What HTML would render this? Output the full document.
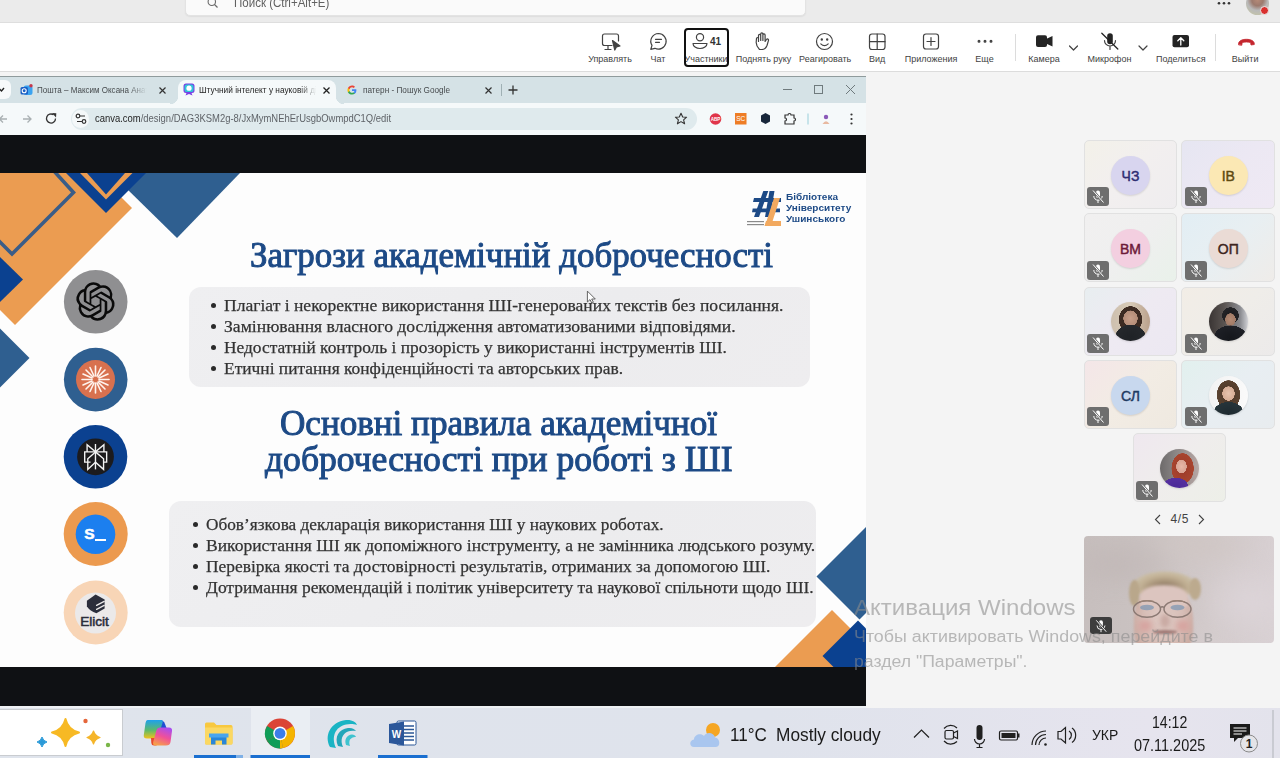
<!DOCTYPE html>
<html><head><meta charset="utf-8">
<style>
*{margin:0;padding:0;box-sizing:border-box}
html,body{width:1280px;height:758px;overflow:hidden;background:#f4f4f4;font-family:"Liberation Sans",sans-serif;position:relative}
.a{position:absolute}
.nw{white-space:nowrap}
.wm{font-family:"Liberation Sans",sans-serif;color:rgba(140,140,140,0.58);transform-origin:0 0}
.tile{width:93.8px;height:69.2px;border:1px solid #e1e1e1;border-radius:5px}
.av{width:38.8px;height:38.8px;border-radius:50%;text-align:center;font:400 14px/40px "Liberation Sans",sans-serif;-webkit-text-stroke:0.45px currentColor;box-shadow:0 1px 2px rgba(0,0,0,.12);margin-top:0.6px}
.mb{width:22px;height:19px;border-radius:3px;background:#6e6e6e}
.tt{font:9px/12px "Liberation Sans",sans-serif;color:#474b4e;transform-origin:0 0}
.tl{top:54.4px;width:100px;text-align:center;font:9px/11px "Liberation Sans",sans-serif;color:#424242}
#titlebar{left:0;top:0;width:1280px;height:23px;background:#ebebeb;border-bottom:1px solid #dedede}
#search{left:185px;top:-6px;width:621px;height:22px;background:#fafafa;border:1px solid #e3e3e3;border-radius:5px;box-shadow:0 0.5px 1.5px rgba(0,0,0,.06)}
#toolbar{left:0;top:23px;width:1280px;height:49px;background:#fff;border-bottom:1px solid #dcdcdc}
#stage{left:0;top:72px;width:1280px;height:636px;background:#f4f4f4}
#browser{left:0;top:76px;width:866px;height:631px;background:#0f1114}
#tabstrip{left:0;top:76px;width:866px;height:27px;background:#d5e2e6;border-top:1px solid #8f9b9c}
#addr{left:0;top:103px;width:866px;height:32px;background:#f5f9fa}
#slide{left:0;top:173px;width:866px;height:494px;background:#fdfdfd;overflow:hidden}
#taskbar{left:0;top:708px;width:1280px;height:50px;background:linear-gradient(90deg,#dfe4ec,#dfe3ec 60%,#e6e4ee 90%,#e3e3ec)}
.st{font-family:"Liberation Serif",serif;color:#1d4a86;font-size:35.5px;line-height:36px;transform-origin:0 0}
.bx{background:linear-gradient(135deg,#efeff1,#ececee 60%,#eeedef);border-radius:12px}
.bl{font-family:"Liberation Serif",serif;color:#333;transform-origin:0 0;font-size:17px;line-height:20px;-webkit-text-stroke:0.25px #333}
.bl div{position:absolute;white-space:nowrap}
.dot{position:absolute;width:5px;height:5px;border-radius:50%;background:#2a2a2a}
</style></head>
<body>
<div id="titlebar" class="a"></div>
<div id="search" class="a"></div>
<div id="toolbar" class="a"></div>
<!-- TITLEBAR -->
<svg class="a" style="left:207px;top:-3px" width="12" height="12" viewBox="0 0 12 12"><circle cx="4.8" cy="4.8" r="3.7" fill="none" stroke="#6a6a6a" stroke-width="1.1"/><line x1="7.5" y1="7.5" x2="10.5" y2="10.5" stroke="#6a6a6a" stroke-width="1.2"/></svg>
<div class="a nw" style="left:234px;top:-4px;font:12px/14px 'Liberation Sans',sans-serif;color:#616161;transform:scaleX(0.961);transform-origin:0 0">Поиск (Ctrl+Alt+E)</div>
<svg class="a" style="left:1216px;top:0" width="16" height="8"><circle cx="3" cy="3.3" r="1.3" fill="#333"/><circle cx="8" cy="3.3" r="1.3" fill="#333"/><circle cx="13" cy="3.3" r="1.3" fill="#333"/></svg>
<div class="a" style="left:1246px;top:-8px;width:23px;height:23px;border-radius:50%;background:radial-gradient(circle at 50% 35%,#b58a78 0,#9c7a6e 30%,#b9b9b9 55%,#c9c9a0 100%)"></div>
<div class="a" style="left:1259.5px;top:5.5px;width:9.5px;height:9.5px;border-radius:50%;background:#d9302e;border:1.3px solid #ebebeb"></div>
<!-- TOOLBAR -->
<div class="a nw tl" style="left:560px">Управлять</div>
<div class="a nw tl" style="left:608px">Чат</div>
<div class="a nw tl" style="left:656px">Участники</div>
<div class="a nw tl" style="left:713.5px">Поднять руку</div>
<div class="a nw tl" style="left:775.2px">Реагировать</div>
<div class="a nw tl" style="left:827.2px">Вид</div>
<div class="a nw tl" style="left:881px">Приложения</div>
<div class="a nw tl" style="left:934.5px">Еще</div>
<div class="a nw tl" style="left:994px">Камера</div>
<div class="a nw tl" style="left:1059.5px">Микрофон</div>
<div class="a nw tl" style="left:1130.8px">Поделиться</div>
<div class="a nw tl" style="left:1195.2px">Выйти</div>
<div class="a" style="left:684px;top:28px;width:45px;height:39px;border:2px solid #111;border-radius:4px"></div>
<div class="a nw" style="left:710px;top:35.5px;font:700 10px/12px 'Liberation Sans',sans-serif;color:#333">41</div>
<div class="a" style="left:1014.5px;top:34px;width:1px;height:27px;background:#dcdcdc"></div>
<div class="a" style="left:1215px;top:34px;width:1px;height:27px;background:#dcdcdc"></div>
<svg class="a" style="left:0;top:0" width="1280" height="72" viewBox="0 0 1280 72" fill="none" stroke="#424242" stroke-width="1.2" stroke-linecap="round" stroke-linejoin="round">
  <!-- manage -->
  <path d="M612,45.5 H604.5 a2,2 0 0 1 -2,-2 V36 a2,2 0 0 1 2,-2 H616.5 a2,2 0 0 1 2,2 V41"/>
  <path d="M608,45.5 V49 M605,49.5 H611"/>
  <path d="M612.5,40.5 L620,46 L616.5,46.8 L614.8,50 Z" fill="#424242"/>
  <!-- chat -->
  <path d="M658.5,33.5 a7.8,7.8 0 1 1 -3.6,14.8 L650.8,49.3 L652,45.4 A7.8,7.8 0 0 1 658.5,33.5 Z"/>
  <path d="M655.5,39.3 H661.5 M655.5,42.3 H659.5"/>
  <!-- people -->
  <circle cx="700" cy="37.2" r="3.6"/>
  <path d="M693,43.5 H707 a0,0 0 0 1 0,0 a7,5 0 0 1 -14,0 Z"/>
  <!-- hand -->
  <path d="M759.5,49.5 C757,47 756,44.5 756.2,42 L756.5,38.5 a1,1 0 0 1 2,0 V41.5 V35.5 a1.1,1.1 0 0 1 2.2,0 V40.5 V34 a1.1,1.1 0 0 1 2.2,0 V40.5 V35 a1.1,1.1 0 0 1 2.2,0 V41.5 L766.5,39.5 a1.1,1.1 0 0 1 2,0.8 L767,45.5 C766,48 764.5,49.5 762,49.5 Z"/>
  <!-- smile -->
  <circle cx="824.5" cy="41.5" r="8"/>
  <circle cx="821.8" cy="39.5" r="0.6" fill="#424242"/><circle cx="827.2" cy="39.5" r="0.6" fill="#424242"/>
  <path d="M820.8,43.8 Q824.5,47.5 828.2,43.8"/>
  <!-- grid -->
  <rect x="869.5" y="34" width="15.5" height="15.5" rx="2.5"/>
  <path d="M877.2,34 V49.5 M869.5,41.7 H885"/>
  <!-- apps -->
  <rect x="923.5" y="34" width="15" height="15" rx="2.5"/>
  <path d="M931,37.5 V45.5 M927,41.5 H935"/>
  <!-- more -->
  <circle cx="979" cy="41.3" r="0.9" fill="#424242"/><circle cx="985" cy="41.3" r="0.9" fill="#424242"/><circle cx="991" cy="41.3" r="0.9" fill="#424242"/>
  <!-- chevrons -->
  <path d="M1069.5,46 L1073.5,50 L1077.5,46 M1139,46 L1143,50 L1147,46"/>
  <!-- camera -->
  <rect x="1036" y="35.3" width="11" height="11.7" rx="2" fill="#242424" stroke="none"/>
  <path d="M1046,39 L1052.5,36 V46.5 L1046,43.5 Z" fill="#242424" stroke="none"/>
  <!-- mic -->
  <rect x="1107.2" y="33.3" width="5.6" height="11" rx="2.8" fill="#242424" stroke="none"/>
  <path d="M1104.5,40.5 a5.5,5.5 0 0 0 11,0 M1110,46 V49.5"/>
  <path d="M1101.8,33.2 L1117.8,49" stroke="#242424" stroke-width="1.3"/>
  <!-- share -->
  <rect x="1172.5" y="35" width="16.5" height="12.2" rx="2" fill="#242424" stroke="none"/>
  <path d="M1180.8,45 V38 M1177.8,40.8 L1180.8,37.8 L1183.8,40.8" stroke="#fff" stroke-width="1.3"/>
  <!-- leave -->
  <path d="M1238.5,44.5 C1238,41 1242,39.3 1246.4,39.3 C1250.8,39.3 1254.8,41 1254.3,44.5 L1251,45 L1250.6,42.5 C1248,41.8 1244.8,41.8 1242.2,42.5 L1241.8,45 Z" fill="#c4262e" stroke="#c4262e" stroke-width="0.8"/>
</svg>
<div id="stage" class="a"></div>
<div id="browser" class="a"></div>
<div id="tabstrip" class="a"></div>
<div id="addr" class="a"></div>

<!-- RIGHT PANEL -->
<div class="a tile" style="left:1083.5px;top:140px;background:linear-gradient(135deg,#f3f1e9,#f2efef 50%,#efedef)"></div>
<div class="a av" style="left:1111.1px;top:155.3px;background:#d8d5ef;color:#2e2d72">ЧЗ</div>
<div class="a mb" style="left:1087.0px;top:187.2px"><svg width="22" height="19" viewBox="0 0 22 19"><rect x="9" y="3.5" width="4" height="7.5" rx="2" fill="#fff"/><path d="M6.8,9 a4.2,4.2 0 0 0 8.4,0 M11,13.2 V16" fill="none" stroke="#fff" stroke-width="1"/><path d="M6,3.5 L16.5,15.5" stroke="#6e6e6e" stroke-width="2.4"/><path d="M6,3.5 L16.5,15.5" stroke="#fff" stroke-width="1"/></svg></div>
<div class="a tile" style="left:1181.3px;top:140px;background:linear-gradient(135deg,#e6e6f2,#ece8f3 50%,#efe9f4)"></div>
<div class="a av" style="left:1208.9px;top:155.3px;background:#fbe8b4;color:#5e4a10">ІВ</div>
<div class="a mb" style="left:1184.8px;top:187.2px"><svg width="22" height="19" viewBox="0 0 22 19"><rect x="9" y="3.5" width="4" height="7.5" rx="2" fill="#fff"/><path d="M6.8,9 a4.2,4.2 0 0 0 8.4,0 M11,13.2 V16" fill="none" stroke="#fff" stroke-width="1"/><path d="M6,3.5 L16.5,15.5" stroke="#6e6e6e" stroke-width="2.4"/><path d="M6,3.5 L16.5,15.5" stroke="#fff" stroke-width="1"/></svg></div>
<div class="a tile" style="left:1083.5px;top:213.3px;background:linear-gradient(135deg,#f1f0f0,#efefef 50%,#e9f1ea)"></div>
<div class="a av" style="left:1111.1px;top:228.6px;background:#f3cfe0;color:#6d1a38">ВМ</div>
<div class="a mb" style="left:1087.0px;top:260.5px"><svg width="22" height="19" viewBox="0 0 22 19"><rect x="9" y="3.5" width="4" height="7.5" rx="2" fill="#fff"/><path d="M6.8,9 a4.2,4.2 0 0 0 8.4,0 M11,13.2 V16" fill="none" stroke="#fff" stroke-width="1"/><path d="M6,3.5 L16.5,15.5" stroke="#6e6e6e" stroke-width="2.4"/><path d="M6,3.5 L16.5,15.5" stroke="#fff" stroke-width="1"/></svg></div>
<div class="a tile" style="left:1181.3px;top:213.3px;background:linear-gradient(135deg,#e2eef4,#e8eff2 50%,#efece9)"></div>
<div class="a av" style="left:1208.9px;top:228.6px;background:#eadbd5;color:#3d2520">ОП</div>
<div class="a mb" style="left:1184.8px;top:260.5px"><svg width="22" height="19" viewBox="0 0 22 19"><rect x="9" y="3.5" width="4" height="7.5" rx="2" fill="#fff"/><path d="M6.8,9 a4.2,4.2 0 0 0 8.4,0 M11,13.2 V16" fill="none" stroke="#fff" stroke-width="1"/><path d="M6,3.5 L16.5,15.5" stroke="#6e6e6e" stroke-width="2.4"/><path d="M6,3.5 L16.5,15.5" stroke="#fff" stroke-width="1"/></svg></div>
<div class="a tile" style="left:1083.5px;top:286.6px;background:linear-gradient(135deg,#e8eef0,#eeeaf2 50%,#ece8f2)"></div>
<div class="a av" style="left:1111.1px;top:301.9px;background:radial-gradient(ellipse 55% 45% at 50% 90%,#1f2226 0,#25282c 70%,rgba(0,0,0,0) 71%),radial-gradient(ellipse 30% 33% at 50% 42%,#c9a08a 0,#b48d78 60%,rgba(0,0,0,0) 62%),radial-gradient(ellipse 42% 48% at 50% 45%,#3a2a22 0,#3d2b22 70%,rgba(0,0,0,0) 72%),linear-gradient(90deg,#cdbfae,#d8cbb8 50%,#b9a08b)"></div>
<div class="a mb" style="left:1087.0px;top:333.8px"><svg width="22" height="19" viewBox="0 0 22 19"><rect x="9" y="3.5" width="4" height="7.5" rx="2" fill="#fff"/><path d="M6.8,9 a4.2,4.2 0 0 0 8.4,0 M11,13.2 V16" fill="none" stroke="#fff" stroke-width="1"/><path d="M6,3.5 L16.5,15.5" stroke="#6e6e6e" stroke-width="2.4"/><path d="M6,3.5 L16.5,15.5" stroke="#fff" stroke-width="1"/></svg></div>
<div class="a tile" style="left:1181.3px;top:286.6px;background:linear-gradient(135deg,#f2ede6,#efede9 50%,#eceaea)"></div>
<div class="a av" style="left:1208.9px;top:301.9px;background:radial-gradient(ellipse 60% 45% at 55% 92%,#15171c 0,#1e2026 70%,rgba(0,0,0,0) 71%),radial-gradient(ellipse 22% 26% at 55% 45%,#b48a73 0,#a17b67 60%,rgba(0,0,0,0) 62%),radial-gradient(ellipse 30% 30% at 55% 35%,#1a1a1d 0,#232326 70%,rgba(0,0,0,0) 72%),linear-gradient(90deg,#3a3534,#5b5552 40%,#8a8b90 80%,#cfd0d4)"></div>
<div class="a mb" style="left:1184.8px;top:333.8px"><svg width="22" height="19" viewBox="0 0 22 19"><rect x="9" y="3.5" width="4" height="7.5" rx="2" fill="#fff"/><path d="M6.8,9 a4.2,4.2 0 0 0 8.4,0 M11,13.2 V16" fill="none" stroke="#fff" stroke-width="1"/><path d="M6,3.5 L16.5,15.5" stroke="#6e6e6e" stroke-width="2.4"/><path d="M6,3.5 L16.5,15.5" stroke="#fff" stroke-width="1"/></svg></div>
<div class="a tile" style="left:1083.5px;top:360px;background:linear-gradient(135deg,#f4e6e8,#f2ece4 50%,#efe9e0)"></div>
<div class="a av" style="left:1111.1px;top:375.3px;background:#c8d8ee;color:#1f3b63">СЛ</div>
<div class="a mb" style="left:1087.0px;top:407.2px"><svg width="22" height="19" viewBox="0 0 22 19"><rect x="9" y="3.5" width="4" height="7.5" rx="2" fill="#fff"/><path d="M6.8,9 a4.2,4.2 0 0 0 8.4,0 M11,13.2 V16" fill="none" stroke="#fff" stroke-width="1"/><path d="M6,3.5 L16.5,15.5" stroke="#6e6e6e" stroke-width="2.4"/><path d="M6,3.5 L16.5,15.5" stroke="#fff" stroke-width="1"/></svg></div>
<div class="a tile" style="left:1181.3px;top:360px;background:linear-gradient(135deg,#e2f0ee,#e8eef2 50%,#e8ecef)"></div>
<div class="a av" style="left:1208.9px;top:375.3px;background:radial-gradient(ellipse 55% 40% at 50% 95%,#1e2a30 0,#26343a 70%,rgba(0,0,0,0) 71%),radial-gradient(ellipse 26% 30% at 50% 45%,#e7c3ae 0,#d6ad96 60%,rgba(0,0,0,0) 62%),radial-gradient(ellipse 42% 52% at 50% 48%,#4a3527 0,#5a4230 70%,rgba(0,0,0,0) 72%),linear-gradient(90deg,#f2f2f2,#fafafa)"></div>
<div class="a mb" style="left:1184.8px;top:407.2px"><svg width="22" height="19" viewBox="0 0 22 19"><rect x="9" y="3.5" width="4" height="7.5" rx="2" fill="#fff"/><path d="M6.8,9 a4.2,4.2 0 0 0 8.4,0 M11,13.2 V16" fill="none" stroke="#fff" stroke-width="1"/><path d="M6,3.5 L16.5,15.5" stroke="#6e6e6e" stroke-width="2.4"/><path d="M6,3.5 L16.5,15.5" stroke="#fff" stroke-width="1"/></svg></div>
<div class="a tile" style="left:1132.5px;top:433.3px;background:linear-gradient(135deg,#efe8ef,#efedec 50%,#edefe8)"></div>
<div class="a av" style="left:1160.1px;top:448.6px;background:radial-gradient(ellipse 45% 30% at 40% 95%,#4b2a98 0,#55309f 70%,rgba(0,0,0,0) 71%),radial-gradient(ellipse 22% 28% at 55% 45%,#e8b8a8 0,#d9a494 60%,rgba(0,0,0,0) 62%),radial-gradient(ellipse 40% 55% at 58% 50%,#9b3a2a 0,#a8442e 70%,rgba(0,0,0,0) 72%),linear-gradient(90deg,#6d6a6a,#8a8686 40%,#b7a7a4)"></div>
<div class="a mb" style="left:1136.0px;top:480.5px"><svg width="22" height="19" viewBox="0 0 22 19"><rect x="9" y="3.5" width="4" height="7.5" rx="2" fill="#fff"/><path d="M6.8,9 a4.2,4.2 0 0 0 8.4,0 M11,13.2 V16" fill="none" stroke="#fff" stroke-width="1"/><path d="M6,3.5 L16.5,15.5" stroke="#6e6e6e" stroke-width="2.4"/><path d="M6,3.5 L16.5,15.5" stroke="#fff" stroke-width="1"/></svg></div>
<svg class="a" style="left:1150px;top:512px" width="60" height="16" fill="none" stroke="#424242" stroke-width="1.1"><path d="M10,3 L5.5,7.5 L10,12"/><path d="M49,3 L53.5,7.5 L49,12"/></svg>
<div class="a nw" style="left:1170.5px;top:511.8px;font:12px/14px 'Liberation Sans',sans-serif;color:#424242;letter-spacing:0.6px">4/5</div>
<!-- self video -->
<div class="a" style="left:1084.4px;top:536.3px;width:189.6px;height:106.4px;border-radius:4px;overflow:hidden;background:linear-gradient(100deg,#c6bebd 0,#cac2c1 35%,#d4cccd 70%,#d9d1d4 100%)">
  <div class="a" style="left:-10px;top:-10px;width:210px;height:126px;filter:blur(6px);background:radial-gradient(ellipse 30% 25% at 20% 30%,#c2b9b8,rgba(0,0,0,0)),radial-gradient(ellipse 25% 30% at 85% 60%,#dcd4d8,rgba(0,0,0,0)),radial-gradient(ellipse 30% 20% at 60% 15%,#cfc6c4,rgba(0,0,0,0))"></div>
  <div class="a" style="left:50px;top:50px;width:59px;height:74px;border-radius:45% 45% 40% 40%;filter:blur(1px);background:radial-gradient(ellipse 60% 55% at 50% 45%,#e0cbc5 0,#d8bfb8 55%,#c7a69c 100%)"></div>
  <div class="a" style="left:54px;top:84px;width:14px;height:12px;border-radius:50%;filter:blur(3px);background:#d6a29e"></div>
  <div class="a" style="left:92px;top:84px;width:14px;height:12px;border-radius:50%;filter:blur(3px);background:#d6a29e"></div>
  <div class="a" style="left:46px;top:30px;width:69px;height:30px;border-radius:50% 50% 35% 35%;filter:blur(1.2px);background:radial-gradient(ellipse 50% 60% at 50% 75%,#7d6b55 0,#a8947a 40%,#c2b195 70%,#c9bca4 90%,rgba(200,188,164,0) 100%)"></div>
  <div class="a" style="left:45px;top:44px;width:11px;height:26px;border-radius:50%;filter:blur(1.2px);background:#b9a78b"></div>
  <div class="a" style="left:105px;top:42px;width:12px;height:22px;border-radius:50%;filter:blur(1.2px);background:#bcaa8e"></div>
  <div class="a" style="left:56px;top:49px;width:48px;height:22px;border-radius:50% 50% 10% 10%;filter:blur(1.5px);background:#dcc5bf"></div>
  <svg class="a" style="left:46px;top:62px" width="66" height="24" fill="none" stroke="#8c7a74" stroke-width="1.5"><ellipse cx="17" cy="11" rx="13.5" ry="8.3"/><ellipse cx="47.5" cy="11" rx="13.5" ry="8.3"/><path d="M30.5,9.5 Q32.2,8 34,9.5"/><ellipse cx="17" cy="9.5" rx="7" ry="2.8" fill="#7f97b3" stroke="none" opacity="0.75"/><ellipse cx="47.5" cy="9.5" rx="7" ry="2.8" fill="#7f97b3" stroke="none" opacity="0.75"/><path d="M9,4 Q17,1.5 24,3.5 M40.5,3.5 Q47.5,1.5 55,4" stroke="#9a8376" stroke-width="1.2"/></svg>
  <div class="a" style="left:76px;top:78px;width:10px;height:14px;border-radius:50%;filter:blur(2px);background:#c9aaa3"></div>
  <div class="a" style="left:69px;top:94px;width:24px;height:3.5px;border-radius:50%;filter:blur(0.8px);background:#a07a76"></div>
  <div class="a" style="left:5.9px;top:80.7px;width:22.2px;height:17.5px;border-radius:3px;background:#3d3d3d"><svg width="22" height="18" viewBox="0 0 22 19"><rect x="9" y="3.5" width="4" height="7.5" rx="2" fill="#fff"/><path d="M6.8,9 a4.2,4.2 0 0 0 8.4,0 M11,13.2 V16" fill="none" stroke="#fff" stroke-width="1"/><path d="M6,3.5 L16.5,15.5" stroke="#3d3d3d" stroke-width="2.4"/><path d="M6,3.5 L16.5,15.5" stroke="#fff" stroke-width="1"/></svg></div>
</div>
<!-- BROWSER CHROME -->
<div class="a" style="left:-8px;top:80px;width:19px;height:19px;border-radius:6px;background:#f7fafb"></div>
<svg class="a" style="left:0;top:86px" width="6" height="8"><path d="M-1,2.5 L1.5,5 L4,2" fill="none" stroke="#222" stroke-width="1.4"/></svg>
<!-- tab1 -->
<svg class="a" style="left:19.5px;top:83.5px" width="13" height="12" viewBox="0 0 13 12"><rect x="3.5" y="1.5" width="9" height="9.5" rx="2.5" fill="#3ba3f0"/><rect x="0.5" y="3" width="7.5" height="7.5" rx="1.5" fill="#1a5fc4"/><circle cx="4.2" cy="6.8" r="2" fill="none" stroke="#fff" stroke-width="1.1"/><circle cx="11" cy="1.8" r="1.7" fill="#c5364a"/></svg>
<div class="a" style="left:37px;top:82px;width:116px;height:18px;overflow:hidden"><div class="a nw tt" style="left:0;top:2px;transform:scaleX(0.8923)">Пошта – Максим Оксана Анатоліївна</div></div>
<div class="a" style="left:130px;top:82px;width:24px;height:18px;background:linear-gradient(90deg,rgba(213,226,230,0),#d5e2e6 70%)"></div>
<svg class="a" style="left:158px;top:85.5px" width="9" height="9"><path d="M1.5,1.5 L7.5,7.5 M7.5,1.5 L1.5,7.5" stroke="#333" stroke-width="1.2"/></svg>
<!-- tab2 active -->
<div class="a" style="left:178px;top:80px;width:158px;height:24px;background:#f5f9fa;border-radius:8px 8px 0 0"></div>
<div class="a" style="left:170px;top:96px;width:8px;height:8px;background:radial-gradient(circle at 0 0,#d5e2e6 8px,#f5f9fa 8.5px)"></div>
<div class="a" style="left:336px;top:96px;width:8px;height:8px;background:radial-gradient(circle at 100% 0,#d5e2e6 8px,#f5f9fa 8.5px)"></div>
<svg class="a" style="left:182.5px;top:83px" width="12" height="13" viewBox="0 0 12 13"><rect x="0.5" y="0.5" width="11" height="9.5" rx="2.5" fill="#7b3fe4"/><rect x="1.5" y="1.5" width="9" height="7.5" rx="2" fill="#2fc5d8"/><circle cx="6" cy="5.2" r="2.6" fill="#fff"/><path d="M3.5,10 L2.5,12.5 L6,11 L9.5,12.5 L8.5,10z" fill="#7b3fe4"/></svg>
<div class="a" style="left:199.4px;top:82px;width:120px;height:18px;overflow:hidden"><div class="a nw tt" style="left:0;top:2px;color:#1f1f1f;transform:scaleX(0.9222)">Штучний інтелект у науковій діяльності</div></div>
<div class="a" style="left:300px;top:82px;width:22px;height:18px;background:linear-gradient(90deg,rgba(245,249,250,0),#f5f9fa 75%)"></div>
<svg class="a" style="left:321.5px;top:85.5px" width="9" height="9"><path d="M1.5,1.5 L7.5,7.5 M7.5,1.5 L1.5,7.5" stroke="#222" stroke-width="1.3"/></svg>
<!-- tab3 -->
<svg class="a" style="left:346.5px;top:84.5px" width="10" height="10" viewBox="0 0 24 24"><path d="M22.5 12.3c0-.8-.1-1.5-.2-2.2H12v4.3h5.9c-.3 1.4-1 2.5-2.2 3.3v2.7h3.6c2-1.9 3.2-4.7 3.2-8.1z" fill="#4285f4"/><path d="M12 23c2.9 0 5.4-1 7.2-2.6l-3.6-2.7c-1 .7-2.2 1.1-3.6 1.1-2.8 0-5.1-1.9-6-4.4H2.3v2.8C4.1 20.7 7.8 23 12 23z" fill="#34a853"/><path d="M6 14.4c-.2-.7-.4-1.4-.4-2.2s.1-1.5.4-2.2V7.2H2.3C1.5 8.7 1 10.4 1 12.2s.5 3.5 1.3 5l3.7-2.8z" fill="#fbbc05"/><path d="M12 5.4c1.6 0 3 .6 4.1 1.6l3.1-3.1C17.4 2.1 14.9 1 12 1 7.8 1 4.1 3.3 2.3 7.2L6 10c.9-2.6 3.2-4.6 6-4.6z" fill="#ea4335"/></svg>
<div class="a nw tt" style="left:362.5px;top:84px;transform:scaleX(0.9125)">патерн - Пошук Google</div>
<svg class="a" style="left:483.5px;top:85.5px" width="9" height="9"><path d="M1.5,1.5 L7.5,7.5 M7.5,1.5 L1.5,7.5" stroke="#333" stroke-width="1.2"/></svg>
<div class="a" style="left:500.5px;top:84px;width:1px;height:12px;background:#9fb0b4"></div>
<svg class="a" style="left:507px;top:84px" width="12" height="12"><path d="M6,1.5 V10.5 M1.5,6 H10.5" stroke="#333" stroke-width="1.3"/></svg>
<!-- window controls -->
<svg class="a" style="left:780px;top:82px" width="80" height="16" fill="none" stroke="#6f7a7d" stroke-width="1"><path d="M3,7.5 H12"/><rect x="34.5" y="3.5" width="8" height="8"/><path d="M66,3 L75,12 M75,3 L66,12"/></svg>
<!-- address bar -->
<svg class="a" style="left:0;top:110px" width="60" height="18" fill="none" stroke-width="1.3"><path d="M7,9 H0 M3,5.5 L-0.5,9 L3,12.5" stroke="#a9b0b2"/><path d="M23,9 H31 M27.5,5.5 L31,9 L27.5,12.5" stroke="#a9b0b2"/><path d="M55.5,8.5 A4.5,4.5 0 1 1 53.5,4.8" stroke="#333"/><path d="M52,3 L56.3,3.2 L56,7.5 Z" fill="#333" stroke="none"/></svg>
<div class="a" style="left:71.2px;top:108px;width:626px;height:22px;border-radius:11px;background:#dfeaed"></div>
<div class="a" style="left:72px;top:110px;width:17px;height:18px;border-radius:9px;background:#f4f8f9"></div>
<svg class="a" style="left:75px;top:113px" width="12" height="12" fill="none" stroke="#333" stroke-width="1.2"><circle cx="3" cy="3" r="1.8"/><path d="M5,3 H10 M2,8.5 H7"/><circle cx="9" cy="8.5" r="1.8"/></svg>
<div class="a nw" style="left:94.5px;top:111px;font:11px/15px 'Liberation Sans',sans-serif;color:#5f6368;transform:scaleX(0.8585);transform-origin:0 0"><span style="color:#1f1f1f">canva.com</span>/design/DAG3KSM2g-8/JxMymNEhErUsgbOwmpdC1Q/edit</div>
<svg class="a" style="left:674px;top:112px" width="14" height="13"><path d="M7,1.2 L8.7,5 L12.6,5.2 L9.6,7.8 L10.6,11.8 L7,9.6 L3.4,11.8 L4.4,7.8 L1.4,5.2 L5.3,5 Z" fill="none" stroke="#333" stroke-width="1.1" stroke-linejoin="round"/></svg>
<svg class="a" style="left:700px;top:110px" width="166" height="18">
  <circle cx="15.5" cy="9" r="5.8" fill="#e0354a"/><text x="15.5" y="10.8" font-family="Liberation Sans" font-size="4.6" font-weight="700" fill="#fff" text-anchor="middle">ABP</text>
  <rect x="35" y="3" width="11.5" height="11.5" fill="#ee7d25"/><text x="40.8" y="11.2" font-family="Liberation Sans" font-size="6.5" fill="#fff" text-anchor="middle">SC</text>
  <path d="M65.5,3 L70,5.5 V11.5 L65.5,14 L61,11.5 V5.5 Z" fill="#17263a"/>
  <path d="M85,5 H88 a1.5,1.5 0 0 1 3,0 H94 V8 a1.5,1.5 0 0 1 0,3 V14 H85 V11 a1.5,1.5 0 0 0 0,-3 Z" fill="none" stroke="#333" stroke-width="1.2"/>
  <rect x="107.5" y="3.5" width="1" height="11" fill="#9ad0da"/>
  <circle cx="126" cy="7" r="2.2" fill="#8a5ab8"/><path d="M122.5,14 Q126,8.5 129.5,14 Z" fill="#e8b9a0"/>
  <circle cx="151.5" cy="4.5" r="1.1" fill="#333"/><circle cx="151.5" cy="9" r="1.1" fill="#333"/><circle cx="151.5" cy="13.5" r="1.1" fill="#333"/>
</svg>

<!-- SLIDE -->
<div id="slide" class="a">
  <svg class="a" style="left:0;top:0" width="866" height="494" viewBox="0 173 866 494">
    <polygon points="126,188 141,173 240,173 177,238" fill="#2f5f90"/>
    <polygon points="0,173 97,173 132,208 15,325 0,310" fill="#eb9c51"/>
    <polyline points="53,170 73.5,192.5 12,254 -12,230" fill="none" stroke="#3a5d88" stroke-width="3.6"/>
    <polygon points="66,173 146,173 106,213" fill="#0b4190"/>
    <polygon points="80,173 132.5,173 106,199.5" fill="#eb9c51"/>
    <polygon points="87,173 125,173 106,194.5" fill="#0b4190"/>
    <polygon points="0,257 23,279.5 0,302" fill="#0b4190"/>
    <polygon points="0,328.5 29.5,358 0,387.5" fill="#2f5f90"/>
    <polygon points="816.5,576.5 866,527 866,626" fill="#2f5f90"/>
    <polygon points="832,610 889,667 775,667" fill="#eb9c51"/>
    <polygon points="858,621 866,613 866,629" fill="#fdfdfd"/>
    <polygon points="822.5,656 858,620.5 866,628.5 866,667 833.5,667" fill="#0b4190"/>
    <!-- library logo -->
    <polygon points="754,217 759,217 768.3,191 763.3,191" fill="#1d4a86"/>
    <polygon points="765,217 770,217 774.5,191 769.5,191" fill="#1d4a86"/>
    <polygon points="754,198 781,198 781,202 753,202" fill="#1d4a86"/>
    <polygon points="752.7,208.4 780,208.4 780,212.2 752,212.2" fill="#1d4a86"/>
    <polygon points="774,198 780,198 771,226 765,226" fill="#f2a95f"/>
    <polygon points="766,221 781,221 781,226 764.5,226" fill="#f2a95f"/>
    <rect x="747" y="221" width="17" height="1.2" fill="#8a8a8a"/>
    <rect x="747" y="224" width="17" height="1.2" fill="#8a8a8a"/>
  <!-- tool circles -->
    <circle cx="95.7" cy="301.8" r="31.8" fill="#8f8f91"/>
    <g transform="translate(76.3,282.3) scale(1.6)"><path fill="#0a0a0a" d="M22.2819 9.8211a5.9847 5.9847 0 0 0-.5157-4.9108 6.0462 6.0462 0 0 0-6.5098-2.9A6.0651 6.0651 0 0 0 4.9807 4.1818a5.9847 5.9847 0 0 0-3.9977 2.9 6.0462 6.0462 0 0 0 .7427 7.0966 5.98 5.98 0 0 0 .511 4.9107 6.051 6.051 0 0 0 6.5146 2.9001A5.9847 5.9847 0 0 0 13.2599 24a6.0557 6.0557 0 0 0 5.7718-4.2058 5.9894 5.9894 0 0 0 3.9977-2.9001 6.0557 6.0557 0 0 0-.7475-7.0729zm-9.022 12.6081a4.4755 4.4755 0 0 1-2.8764-1.0408l.1419-.0804 4.7783-2.7582a.7948.7948 0 0 0 .3927-.6813v-6.7369l2.02 1.1686a.071.071 0 0 1 .038.052v5.5826a4.504 4.504 0 0 1-4.4945 4.4944zm-9.6607-4.1254a4.4708 4.4708 0 0 1-.5346-3.0137l.142.0852 4.783 2.7582a.7712.7712 0 0 0 .7806 0l5.8428-3.3685v2.3324a.0804.0804 0 0 1-.0332.0615L9.74 19.9502a4.4992 4.4992 0 0 1-6.1408-1.6464zM2.3408 7.8956a4.485 4.485 0 0 1 2.3655-1.9728V11.6a.7664.7664 0 0 0 .3879.6765l5.8144 3.3543-2.0201 1.1685a.0757.0757 0 0 1-.071 0l-4.8303-2.7865A4.504 4.504 0 0 1 2.3408 7.872zm16.5963 3.8558L13.1038 8.364 15.1192 7.2a.0757.0757 0 0 1 .071 0l4.8303 2.7913a4.4944 4.4944 0 0 1-.6765 8.1042v-5.6772a.79.79 0 0 0-.407-.667zm2.0107-3.0231l-.142-.0852-4.7735-2.7818a.7759.7759 0 0 0-.7854 0L9.409 9.2297V6.8974a.0662.0662 0 0 1 .0284-.0615l4.8303-2.7866a4.4992 4.4992 0 0 1 6.6802 4.66zM8.3065 12.863l-2.02-1.1638a.0804.0804 0 0 1-.038-.0567V6.0742a4.4992 4.4992 0 0 1 7.3757-3.4537l-.142.0805L8.704 5.459a.7948.7948 0 0 0-.3927.6813zm1.0976-2.3654l2.602-1.4998 2.6069 1.4998v2.9994l-2.5974 1.4997-2.6067-1.4997Z"/></g>
    <circle cx="95.7" cy="379.6" r="31.8" fill="#2f5f90"/>
    <circle cx="95.5" cy="379.5" r="19.5" fill="#d8714f"/>
    <g stroke="#fff4ee" stroke-width="1.6" stroke-linecap="round">
      <line x1="95.5" y1="366" x2="95.5" y2="376"/><line x1="95.5" y1="383" x2="95.5" y2="393"/>
      <line x1="82" y1="379.5" x2="92" y2="379.5"/><line x1="99" y1="379.5" x2="109" y2="379.5"/>
      <line x1="86" y1="370" x2="93" y2="377"/><line x1="98" y1="382" x2="105" y2="389"/>
      <line x1="105" y1="370" x2="98" y2="377"/><line x1="93" y1="382" x2="86" y2="389"/>
      <line x1="90" y1="367.5" x2="94" y2="376"/><line x1="97" y1="383" x2="101" y2="391.5"/>
      <line x1="101" y1="367.5" x2="97" y2="376"/><line x1="94" y1="383" x2="90" y2="391.5"/>
      <line x1="83" y1="374" x2="92" y2="378"/><line x1="99" y1="381" x2="108" y2="385"/>
      <line x1="108" y1="374" x2="99" y2="378"/><line x1="92" y1="381" x2="83" y2="385"/>
    </g>
    <circle cx="95.5" cy="456.8" r="31.8" fill="#0b4190"/>
    <circle cx="95.5" cy="456.8" r="18.4" fill="#1c1b1d"/>
    <g transform="translate(84.7,444) scale(0.0686)" fill="none" stroke="#f4f4f4" stroke-width="20" stroke-linejoin="miter">
      <path d="M35,115 V10 L157,115 L280,10 V115"/>
      <path d="M85,265 H0 V115 H320 V265 H275"/>
      <path d="M157,0 V370"/>
      <path d="M157,115 L45,215 V370 L157,265 L275,370 V215 L157,115"/>
    </g>
    <circle cx="95.7" cy="534" r="32" fill="#ec9a4f"/>
    <circle cx="95.5" cy="534.2" r="19.8" fill="#1c7fef"/>
    <circle cx="95.7" cy="612.5" r="32" fill="#f8d5b6"/>
    <circle cx="95.5" cy="613" r="20.5" fill="#ebe9e9"/>
    <g>
      <path d="M86.9,600.8 L95.6,594.6 L104.6,599.6 L104.6,608.6 L96.4,613.2 Q90,611 86.9,606.5 Z" fill="#2b2e3b"/>
      <path d="M96.6,605.4 L104.2,601.4 M96.6,609.4 L104.2,605.4" stroke="#ebe9e9" stroke-width="1.3" stroke-linecap="round"/>
    </g>
  </svg>
  <div class="a nw" style="left:785.5px;top:19px;font:700 9px/11.2px 'Liberation Sans',sans-serif;color:#1d4a86;transform:scaleX(1.113);transform-origin:0 0">Бібліотека<br>Університету<br>Ушинського</div>
  <div class="a nw" style="left:84.3px;top:352.8px;font:700 15.5px/16px 'Liberation Sans',sans-serif;color:#fff;-webkit-text-stroke:0.5px #fff">S</div><div class="a" style="left:94.8px;top:365.6px;width:11.6px;height:2.3px;background:#fff"></div>
  <div class="a nw" style="left:80.2px;top:441.5px;font:400 13.6px/14px 'Liberation Sans',sans-serif;color:#2b2e3b;-webkit-text-stroke:0.55px #2b2e3b">Elicit</div>
  <div class="a bx" style="left:189px;top:114px;width:621px;height:100px"></div>
  <div class="a bx" style="left:169px;top:328px;width:647px;height:126px"></div>
</div>
<div class="a st nw" style="left:250px;top:236.5px;-webkit-text-stroke:1px #1d4a86;transform:scaleX(0.9832)">Загрози академічній доброчесності</div>
<div class="a st nw" style="left:280px;top:406px;font-size:35px;-webkit-text-stroke:1px #1d4a86;transform:scaleX(1.0026)">Основні правила академічної</div>
<div class="a st nw" style="left:265px;top:442px;font-size:35px;-webkit-text-stroke:1px #1d4a86;transform:scaleX(1.0162)">доброчесності при роботі з ШІ</div>


<div class="a bl nw" style="left:223.5px;top:295.8px;transform:scaleX(1.0324)">Плагіат і некоректне використання ШІ-генерованих текстів без посилання.</div>
<div class="a dot" style="left:210.8px;top:303.0px"></div>
<div class="a bl nw" style="left:223.5px;top:316.8px;transform:scaleX(1.0367)">Замінювання власного дослідження автоматизованими відповідями.</div>
<div class="a dot" style="left:210.8px;top:324.0px"></div>
<div class="a bl nw" style="left:223.5px;top:337.8px;transform:scaleX(1.0219)">Недостатній контроль і прозорість у використанні інструментів ШІ.</div>
<div class="a dot" style="left:210.8px;top:345.0px"></div>
<div class="a bl nw" style="left:223.5px;top:358.8px;transform:scaleX(1.0242)">Етичні питання конфіденційності та авторських прав.</div>
<div class="a dot" style="left:210.8px;top:366.0px"></div>
<div class="a bl nw" style="left:206.2px;top:514.8px;transform:scaleX(1.0149)">Обов’язкова декларація використання ШІ у наукових роботах.</div>
<div class="a dot" style="left:193.3px;top:522.0px"></div>
<div class="a bl nw" style="left:206.2px;top:535.8px;transform:scaleX(1.0313)">Використання ШІ як допоміжного інструменту, а не замінника людського розуму.</div>
<div class="a dot" style="left:193.3px;top:543.0px"></div>
<div class="a bl nw" style="left:206.2px;top:556.8px;transform:scaleX(1.0229)">Перевірка якості та достовірності результатів, отриманих за допомогою ШІ.</div>
<div class="a dot" style="left:193.3px;top:564.0px"></div>
<div class="a bl nw" style="left:206.2px;top:577.8px;transform:scaleX(1.0252)">Дотримання рекомендацій і політик університету та наукової спільноти щодо ШІ.</div>
<div class="a dot" style="left:193.3px;top:585.0px"></div>

<svg class="a" style="left:586px;top:290px" width="12" height="15" viewBox="0 0 12 15"><path d="M1.4,1.1 V12 L4,9.6 L5.8,13 L7.4,12.3 L5.7,9 H9.3Z" fill="#fff" stroke="#555" stroke-width="0.9" stroke-linejoin="round"/></svg>
<div id="taskbar" class="a"></div>
<!-- TASKBAR -->
<div class="a" style="left:0;top:706px;width:866px;height:2px;background:#eef1f4"></div>
<div class="a" style="left:250.5px;top:708px;width:59.5px;height:50px;background:#eaeef3"></div>
<div class="a" style="left:0;top:709px;width:123px;height:47px;background:#fff;border:1px solid #c9ccd0;border-left:none"></div>
<svg class="a" style="left:0;top:708px" width="1280" height="50" viewBox="0 708 1280 50">
  <!-- sparkles -->
  <path d="M65.5,719 Q68,730 79,732.5 Q68,735 65.5,746 Q63,735 52,732.5 Q63,730 65.5,719Z" fill="#f7b924" stroke="#f7b924" stroke-width="2" stroke-linejoin="round"/>
  <path d="M93.5,731 Q95,736 100,737.5 Q95,739 93.5,744 Q92,739 87,737.5 Q92,736 93.5,731Z" fill="#f5b52a" stroke="#f5b52a" stroke-width="1.2" stroke-linejoin="round"/>
  <path d="M42,737 Q43,741 47,742 Q43,743 42,747 Q41,743 37,742 Q41,741 42,737Z" fill="#2a9ad8" stroke="#2a9ad8" stroke-width="1" stroke-linejoin="round"/>
  <circle cx="85.5" cy="721" r="2.2" fill="#e5663a"/><circle cx="108" cy="745" r="2.2" fill="#7ab648"/>
  <!-- copilot -->
  <defs><linearGradient id="cp1" x1="0" y1="0" x2="0" y2="1"><stop offset="0" stop-color="#1ea0ee"/><stop offset="0.55" stop-color="#5cba6a"/><stop offset="1" stop-color="#f2c21a"/></linearGradient>
  <linearGradient id="cp2" x1="0.7" y1="0" x2="0.3" y2="1"><stop offset="0" stop-color="#a84ef0"/><stop offset="0.5" stop-color="#f0509a"/><stop offset="1" stop-color="#f7a048"/></linearGradient>
  <linearGradient id="ch" x1="0" y1="0" x2="0" y2="1"><stop offset="0" stop-color="#4da4f0"/><stop offset="1" stop-color="#1b62c8"/></linearGradient></defs>
  <path d="M160,720 Q163.5,720 165,724 L166.5,728 H158Z" fill="#1f4fd2"/>
  <path d="M147.5,720 H161 Q163.5,720 162.5,723 L157.5,738.5 H147 Q143.3,738.5 143.8,735 L145.5,723 Q146,720 147.5,720Z" fill="url(#cp1)"/>
  <path d="M151,738 H158 L156.5,745.5 H154 Q151.5,745.5 151.3,743Z" fill="#e84a2c"/>
  <path d="M159.5,727.5 H169 Q172.5,727.5 172,731 L170.5,742 Q170,745.5 166,745.5 H155.5 Q152.5,745.5 153.2,742 L156.5,730 Q157.3,727.5 159.5,727.5Z" fill="url(#cp2)"/>
  <!-- explorer -->
  <path d="M205,724 a1.5,1.5 0 0 1 1.5,-1.5 H214 L216.5,725 H231 a1.5,1.5 0 0 1 1.5,1.5 V743 a1.5,1.5 0 0 1 -1.5,1.5 H206.5 a1.5,1.5 0 0 1 -1.5,-1.5Z" fill="#f8c83f"/>
  <path d="M205,727.5 H232.5 V743 a1.5,1.5 0 0 1 -1.5,1.5 H206.5 a1.5,1.5 0 0 1 -1.5,-1.5Z" fill="#fbd862"/>
  <path d="M211,744.5 V737 H226.5 V744.5 H222 V740.5 H215.5 V744.5Z" fill="#2a86d8"/>
  <rect x="209" y="733.5" width="19.5" height="4" fill="#4aa5ee"/>
  <!-- chrome -->
  <circle cx="280" cy="733.4" r="15" fill="#db4437"/>
  <path d="M280,733.4 L267,741 A15,15 0 0 0 283,748.1Z" fill="#0f9d58"/>
  <path d="M280,733.4 L267,725.9 A15,15 0 0 0 267,741Z" fill="#0f9d58"/>
  <path d="M280,733.4 L293,725.9 A15,15 0 0 1 283,748.1Z" fill="#f4b400"/>
  <path d="M280,733.4 L280,748.4 A15,15 0 0 0 283,748.1Z" fill="#f4b400"/>
  <circle cx="280" cy="733.4" r="6.8" fill="#fff"/><circle cx="280" cy="733.4" r="5.4" fill="#3b7de8"/>
  <!-- teal app -->
  <path d="M330,747 C324,736 330,722 346,720 C352,719.5 356,722 357,725 C354,724 350,723.5 346,724.5 C335,727 331,737 336,748Z" fill="#1ab4c4"/>
  <path d="M338,746 C334,737 339,729 348,728 C352,727.5 355,729 356,731 C353,730.5 350,730.5 348,731.5 C342,734 340,740 343,747Z" fill="#23a6b9"/>
  <path d="M346,745 C344,739 347,735 352,734.5 C354,734.5 355.5,735.5 356,737 C353,737 350,738.5 349.5,741 C349,743 349.5,745 350,746Z" fill="#3fc3cf"/>
  <!-- word -->
  <rect x="397" y="721" width="19" height="24" rx="1.5" fill="#fff" stroke="#2b5797" stroke-width="1"/>
  <path d="M401,726 H414 M401,729.5 H414 M401,733 H414 M401,736.5 H414 M401,740 H414" stroke="#2b5797" stroke-width="1.3"/>
  <path d="M389,724 L404,721.5 V745.5 L389,743Z" fill="#2b579a"/>
  <text x="396.5" y="738" font-family="Liberation Sans" font-weight="700" font-size="10" fill="#fff" text-anchor="middle">W</text>
  <!-- indicators -->
  <rect x="194" y="755" width="42" height="3" fill="#1a6fd0"/><rect x="236" y="755" width="7" height="3" fill="#7fb0e6"/>
  <rect x="250.5" y="755" width="59.5" height="3" fill="#1a6fd0"/>
  <rect x="378" y="755" width="49.5" height="3" fill="#1a6fd0"/>
  <!-- weather -->
  <circle cx="713" cy="730" r="7" fill="#f5a623"/>
  <path d="M694,747 C689,747 689,740 694,739.5 C694,734.5 701,732.5 704,736 C706,731.5 714,732 715,737.5 C720,737.5 721,747 716,747Z" fill="#a9c6ef"/>
  <!-- tray -->
  <g fill="none" stroke="#202020" stroke-width="1.2">
    <path d="M914,737.5 L921.5,730 L929,737.5"/>
    <rect x="945" y="730.5" width="8.5" height="8.5" rx="1.5"/><path d="M953.5,733 L957.5,731 V738.5 L953.5,736.5"/>
    <path d="M944,728.5 A9,9 0 0 1 957,728 M944,741 A9,9 0 0 0 957,741.5"/>
    <path d="M974.5,739 a5,5 0 0 0 10,0 M979.5,744 V747.5 M976.5,747.5 H982.5"/>
    <rect x="999.5" y="731" width="18" height="9" rx="1.5"/>
    <path d="M1032,745 A14,14 0 0 1 1046,731 M1035.5,745 A10.5,10.5 0 0 1 1046,734.5 M1039,745 A7,7 0 0 1 1046,738"/>
    <path d="M1058,731.5 H1061 L1065.5,727.5 V743 L1061,739 H1058Z M1069,731 A5,5 0 0 1 1069,739.5 M1072,728 A9,9 0 0 1 1072,742.5"/>
  </g>
  <rect x="976.5" y="725" width="6" height="15" rx="3" fill="#202020"/>
  <rect x="1001.5" y="733" width="14" height="5" fill="#202020"/><rect x="1018" y="733.5" width="1.5" height="4" fill="#202020"/>
  <circle cx="1045.5" cy="744.5" r="1.3" fill="#202020"/>
  <!-- notification -->
  <path d="M1230,724 H1250 V738 H1238 L1234,742 V738 H1230Z" fill="#1a1a1a"/>
  <path d="M1233.5,728 H1246.5 M1233.5,731 H1246.5 M1233.5,734 H1242" stroke="#fff" stroke-width="1"/>
  <circle cx="1249" cy="743.5" r="8.5" fill="#e4e4e8" stroke="#8a8a8a" stroke-width="1"/>
  <text x="1249" y="748" font-family="Liberation Sans" font-weight="700" font-size="12" fill="#222" text-anchor="middle">1</text>
  <rect x="1272.5" y="710" width="1" height="48" fill="#b0b3b8"/>
</svg>
<div class="a nw" style="left:730px;top:724.3px;font:18px/22px 'Liberation Sans',sans-serif;color:#1a1a1a;transform:scaleX(0.95);transform-origin:0 0">11°C</div>
<div class="a nw" style="left:776.2px;top:724.3px;font:18px/22px 'Liberation Sans',sans-serif;color:#1a1a1a;transform:scaleX(0.96);transform-origin:0 0">Mostly cloudy</div>
<div class="a nw" style="left:1091.5px;top:725.7px;font:15px/18px 'Liberation Sans',sans-serif;color:#1a1a1a;transform:scaleX(0.93);transform-origin:0 0">УКР</div>
<div class="a nw" style="left:1152px;top:713.3px;font:17px/20px 'Liberation Sans',sans-serif;color:#1a1a1a;transform:scaleX(0.83);transform-origin:0 0">14:12</div>
<div class="a nw" style="left:1134px;top:735.6px;font:17px/20px 'Liberation Sans',sans-serif;color:#1a1a1a;transform:scaleX(0.85);transform-origin:0 0">07.11.2025</div>
<!-- WATERMARK -->
<div class="a nw wm" style="left:853.5px;top:593.5px;font-size:22.7px;line-height:26px;transform:scaleX(1.06)">Активация Windows</div>
<div class="a nw wm" style="left:854px;top:626.5px;font-size:15.8px;line-height:20px;transform:scaleX(1.13)">Чтобы активировать Windows, перейдите в</div>
<div class="a nw wm" style="left:854px;top:651.5px;font-size:15.8px;line-height:20px;transform:scaleX(1.118)">раздел "Параметры".</div>

</body></html>
